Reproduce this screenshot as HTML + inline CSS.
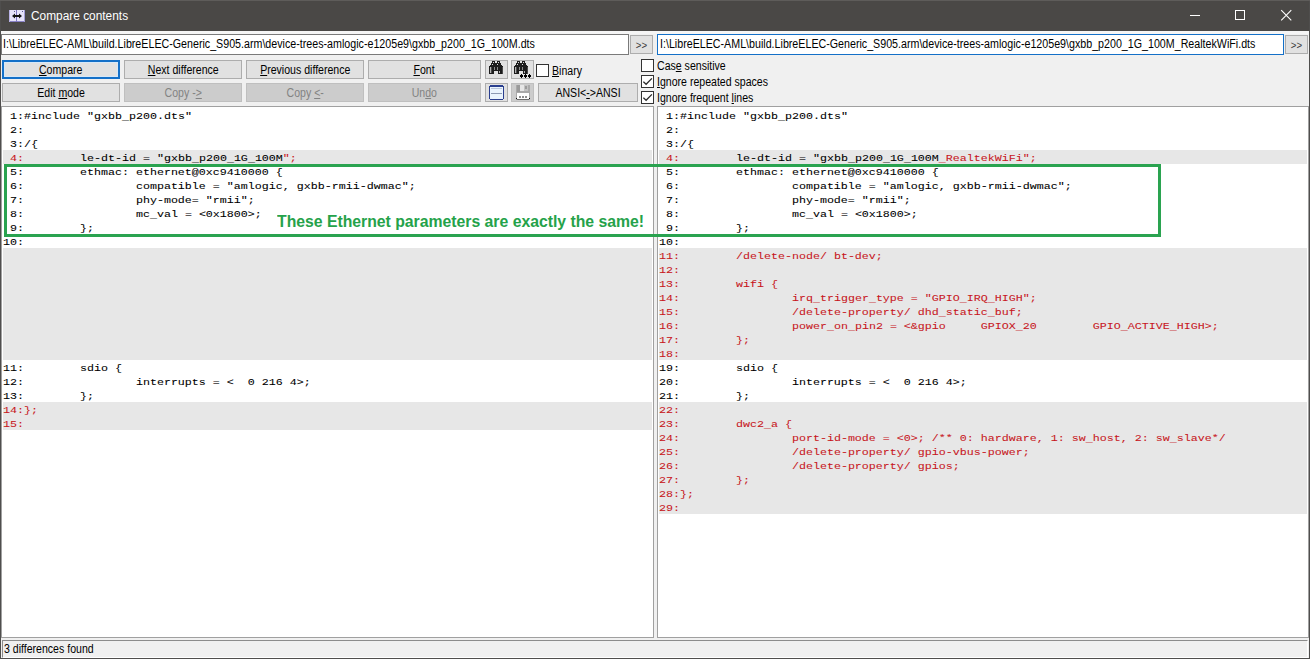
<!DOCTYPE html><html><head><meta charset="utf-8"><style>
*{margin:0;padding:0;box-sizing:border-box}
html,body{width:1310px;height:659px;overflow:hidden;background:#f0f0f0}
body{position:relative;font-family:"Liberation Sans",sans-serif;font-size:12px;color:#000}
.a{position:absolute}
.lbl{position:absolute;white-space:nowrap;transform-origin:0 0;transform:scaleX(0.88);line-height:14px}
.btn{position:absolute;background:#e1e1e1;border:1px solid #adadad}
.btn.dis{background:#cccccc;border-color:#bfbfbf}
.dis .t{color:#838383}
.btn .t{position:absolute;left:0;right:0;top:2px;text-align:center;white-space:nowrap;line-height:14px}
.btn .t span.s{display:inline-block;transform:scaleX(0.88)}
u{text-decoration:underline;text-underline-offset:1px}
.cb{position:absolute;width:13px;height:13px;border:1px solid #333;background:#fff}
.pane{position:absolute;top:106px;height:532px;background:#fff;border:1px solid #a0a0a0;overflow:hidden}
.code{position:absolute;left:1px;top:1px;right:1px;bottom:0;overflow:hidden}
.row{position:absolute;left:0;right:0;height:14px;font-family:"Liberation Mono",monospace;font-size:11.667px;-webkit-text-stroke:0.08px currentColor;line-height:14px;white-space:pre;color:#000}
.row.g{background:#e7e7e7}
.r{color:#c8181e}
.u{position:relative;top:2px}
.tx{display:block;transform-origin:0 0;transform:translateY(2px) scaleY(0.85)}
</style></head><body>
<div class="a" style="left:0;top:0;width:1310px;height:31px;background:#4a4846"></div>
<div class="a" style="left:1px;top:31px;width:1308px;height:3px;background:#f5f5f5"></div>
<svg class="a" style="left:9px;top:10px" width="16" height="12" viewBox="0 0 16 12" shape-rendering="crispEdges">
<rect x="0" y="0" width="16" height="12" fill="#e6e2fa"/>
<rect x="0" y="11" width="16" height="1" fill="#8a83c6"/>
<rect x="15" y="0" width="1" height="12" fill="#a29cd6"/>
<rect x="0" y="0" width="1" height="12" fill="#b9b3e6"/>
<rect x="7" y="0" width="1" height="12" fill="#7d76c0"/>
<rect x="5" y="1" width="1" height="1" fill="#5b5890"/><rect x="13" y="1" width="1" height="1" fill="#5b5890"/>
<path d="M3 6 L6 3.5 V5 H10 V3.5 L13 6 L10 8.5 V7 H6 V8.5 Z" fill="#111" shape-rendering="geometricPrecision"/>
</svg>
<div class="a" style="left:31px;top:9px;color:#fff;font-size:12px;line-height:14px;white-space:nowrap;transform-origin:0 0;transform:scaleX(0.99)">Compare contents</div>
<div class="a" style="left:1190px;top:15px;width:10px;height:1px;background:#fff"></div>
<div class="a" style="left:1235px;top:10px;width:10px;height:10px;border:1px solid #fff"></div>
<svg class="a" style="left:1280px;top:9px" width="13" height="13" viewBox="0 0 13 13"><path d="M1.2 1.2 L11.3 11.3 M11.3 1.2 L1.2 11.3" stroke="#fff" stroke-width="1.1"/></svg>
<div class="a" style="left:1px;top:34px;width:628px;height:21px;background:#fff;border:1px solid #7a7a7a"></div>
<div class="lbl" style="left:3px;top:37px;transform:scaleX(0.89);">I:\LibreELEC-AML\build.LibreELEC-Generic_S905.arm\device-trees-amlogic-e1205e9\gxbb_p200_1G_100M.dts</div>
<div class="btn" style="left:630px;top:35px;width:23px;height:19px"><div class="t" style="color:#3a3a3a;top:2px;font-size:11px"><span class="s">&gt;&gt;</span></div></div>
<div class="a" style="left:657px;top:34px;width:627px;height:21px;background:#fff;border:1px solid #1470c8"></div>
<div class="lbl" style="left:660px;top:37px;transform:scaleX(0.89);">I:\LibreELEC-AML\build.LibreELEC-Generic_S905.arm\device-trees-amlogic-e1205e9\gxbb_p200_1G_100M_RealtekWiFi.dts</div>
<div class="btn" style="left:1285px;top:35px;width:23px;height:19px"><div class="t" style="color:#3a3a3a;top:2px;font-size:11px"><span class="s">&gt;&gt;</span></div></div>
<div class="btn" style="left:2px;top:60px;width:118px;height:19px;border:2px solid #1470c8;box-shadow:inset 0 0 0 1px #d6e8f8"><div class="t" style="top:1px"><span class="s"><u>C</u>ompare</span></div></div>
<div class="btn" style="left:124px;top:60px;width:118px;height:19px;"><div class="t"><span class="s"><u>N</u>ext difference</span></div></div>
<div class="btn" style="left:246px;top:60px;width:118px;height:19px;"><div class="t"><span class="s"><u>P</u>revious difference</span></div></div>
<div class="btn" style="left:368px;top:60px;width:113px;height:19px;"><div class="t"><span class="s"><u>F</u>ont</span></div></div>
<div class="btn" style="left:485px;top:60px;width:23px;height:19px;"><div class="t"><span class="s"></span></div></div>
<div class="btn" style="left:511px;top:60px;width:23px;height:19px;"><div class="t"><span class="s"></span></div></div>
<svg class="a" style="left:487px;top:59px" width="18" height="17" viewBox="0 0 18 17" shape-rendering="crispEdges">
<g fill="#1c1c1c">
<rect x="5" y="2" width="3" height="2"/><rect x="10" y="2" width="3" height="2"/>
<rect x="4" y="4" width="10" height="2"/>
<rect x="3" y="6" width="12" height="1"/>
<rect x="2" y="7" width="5" height="8"/><rect x="11" y="7" width="5" height="8"/>
<rect x="7" y="6" width="4" height="6"/>
</g>
<g fill="#b4b4b4">
<rect x="3" y="8" width="1" height="6"/><rect x="12" y="12" width="1" height="2"/>
</g>
<g fill="#8a8a8a"><rect x="7" y="8" width="1" height="3"/><rect x="10" y="8" width="1" height="3"/></g>
<g fill="#dcdcdc"><rect x="6" y="3" width="1" height="1"/><rect x="11" y="3" width="1" height="1"/><rect x="5" y="5" width="1" height="1"/><rect x="10" y="5" width="1" height="1"/></g>
<g fill="#4a4a4a"><rect x="15" y="8" width="1" height="7"/><rect x="4" y="8" width="1" height="6"/></g>
</svg>
<svg class="a" style="left:512px;top:59px" width="18" height="17" viewBox="0 0 18 17" shape-rendering="crispEdges">
<g fill="#1c1c1c">
<rect x="5" y="2" width="3" height="2"/><rect x="10" y="2" width="3" height="2"/>
<rect x="4" y="4" width="10" height="2"/>
<rect x="3" y="6" width="12" height="1"/>
<rect x="2" y="7" width="5" height="8"/><rect x="11" y="7" width="5" height="8"/>
<rect x="7" y="6" width="4" height="6"/>
</g>
<g fill="#b4b4b4">
<rect x="3" y="8" width="1" height="6"/><rect x="12" y="12" width="1" height="2"/>
</g>
<g fill="#8a8a8a"><rect x="7" y="8" width="1" height="3"/><rect x="10" y="8" width="1" height="3"/></g>
<g fill="#dcdcdc"><rect x="6" y="3" width="1" height="1"/><rect x="11" y="3" width="1" height="1"/><rect x="5" y="5" width="1" height="1"/><rect x="10" y="5" width="1" height="1"/></g>
<g fill="#4a4a4a"><rect x="15" y="8" width="1" height="7"/><rect x="4" y="8" width="1" height="6"/></g>
</svg>
<svg class="a" style="left:519px;top:74px" width="14" height="5" viewBox="0 0 14 5" shape-rendering="crispEdges"><g fill="#000">
<rect x="1" y="1" width="3" height="2"/><rect x="2" y="0" width="1" height="4"/>
<rect x="5" y="1" width="3" height="2"/><rect x="6" y="0" width="1" height="4"/>
<rect x="9" y="1" width="3" height="2"/><rect x="10" y="0" width="1" height="4"/>
</g></svg>
<div class="btn" style="left:2px;top:83px;width:118px;height:19px;"><div class="t"><span class="s">Edit <u>m</u>ode</span></div></div>
<div class="btn dis" style="left:124px;top:83px;width:118px;height:19px;"><div class="t"><span class="s">Copy -<u>&gt;</u></span></div></div>
<div class="btn dis" style="left:246px;top:83px;width:118px;height:19px;"><div class="t"><span class="s">Copy <u>&lt;</u>-</span></div></div>
<div class="btn dis" style="left:368px;top:83px;width:113px;height:19px;"><div class="t"><span class="s">Un<u>d</u>o</span></div></div>
<div class="btn" style="left:485px;top:83px;width:23px;height:19px;"><div class="t"><span class="s"></span></div></div>
<div class="btn dis" style="left:511px;top:83px;width:23px;height:19px;"><div class="t"><span class="s"></span></div></div>
<svg class="a" style="left:489px;top:85px" width="15" height="15" viewBox="0 0 15 15" shape-rendering="crispEdges">
<path d="M1 0 H14 V1 H15 V14 H14 V15 H1 V14 H0 V1 H1 Z" fill="#2a3f8f"/>
<rect x="1" y="2" width="13" height="12" fill="#eaf4fd"/>
<rect x="2" y="3" width="11" height="1" fill="#b9c6dc"/>
<rect x="2" y="8" width="11" height="1" fill="#8d9ab3"/>
</svg>
<svg class="a" style="left:516px;top:85px" width="14" height="15" viewBox="0 0 14 15" shape-rendering="crispEdges">
<rect x="0" y="0" width="14" height="15" fill="#a9a9a9"/>
<rect x="1" y="0" width="3" height="7" fill="#9a9a9a"/>
<rect x="4" y="0" width="4" height="6" fill="#e6e6e6"/>
<rect x="8" y="0" width="4" height="6" fill="#c2c2c2"/>
<rect x="9" y="1" width="2" height="3" fill="#9b9b9b"/>
<rect x="1" y="8" width="12" height="6" fill="#ffffff"/>
<rect x="3" y="11" width="2" height="2" fill="#8f8f8f"/><rect x="6" y="11" width="2" height="2" fill="#8f8f8f"/><rect x="9" y="11" width="2" height="2" fill="#8f8f8f"/>
<rect x="0" y="13" width="1" height="1" fill="#111"/><rect x="13" y="13" width="1" height="1" fill="#111"/>
<rect x="1" y="14" width="12" height="1" fill="#6e6e6e"/>
</svg>
<div class="btn" style="left:538px;top:83px;width:100px;height:19px;"><div class="t"><span class="s">ANSI&lt;<u>-</u>&gt;ANSI</span></div></div>
<div class="cb" style="left:536px;top:64px"></div>
<div class="lbl" style="left:552px;top:64px;"><u>B</u>inary</div>
<div class="cb" style="left:641px;top:59px"></div>
<div class="lbl" style="left:657px;top:59px;">Cas<u>e</u> sensitive</div>
<div class="cb" style="left:641px;top:75px"><svg class="a" style="left:1px;top:2px" width="11" height="9" viewBox="0 0 11 9"><path d="M0.4 3.7 L3.1 6.3 L8.9 0.4" fill="none" stroke="#2a2a2a" stroke-width="1.25"/></svg></div>
<div class="lbl" style="left:657px;top:75px;"><u>I</u>gnore repeated spaces</div>
<div class="cb" style="left:641px;top:91px"><svg class="a" style="left:1px;top:2px" width="11" height="9" viewBox="0 0 11 9"><path d="M0.4 3.7 L3.1 6.3 L8.9 0.4" fill="none" stroke="#2a2a2a" stroke-width="1.25"/></svg></div>
<div class="lbl" style="left:657px;top:91px;">Ignore frequent <u>l</u>ines</div>
<div class="pane" style="left:1px;width:653px"><div class="code"><div class="row" style="top:0px"><span class="tx"> 1:#include &quot;gxbb<span class="u">_</span>p200.dts&quot;</span></div>
<div class="row" style="top:14px"><span class="tx"> 2:</span></div>
<div class="row" style="top:28px"><span class="tx"> 3:/{</span></div>
<div class="row g" style="top:42px"><span class="tx"><span class="r"> 4:</span>        le-dt-id = &quot;gxbb<span class="u">_</span>p200<span class="u">_</span>1G<span class="u">_</span>100M<span class="r">&quot;;</span></span></div>
<div class="row" style="top:56px"><span class="tx"> 5:        ethmac: ethernet@0xc9410000 {</span></div>
<div class="row" style="top:70px"><span class="tx"> 6:                compatible = &quot;amlogic, gxbb-rmii-dwmac&quot;;</span></div>
<div class="row" style="top:84px"><span class="tx"> 7:                phy-mode= &quot;rmii&quot;;</span></div>
<div class="row" style="top:98px"><span class="tx"> 8:                mc<span class="u">_</span>val = &lt;0x1800&gt;;</span></div>
<div class="row" style="top:112px"><span class="tx"> 9:        };</span></div>
<div class="row" style="top:126px"><span class="tx">10:</span></div>
<div class="row g" style="top:140px"></div>
<div class="row g" style="top:154px"></div>
<div class="row g" style="top:168px"></div>
<div class="row g" style="top:182px"></div>
<div class="row g" style="top:196px"></div>
<div class="row g" style="top:210px"></div>
<div class="row g" style="top:224px"></div>
<div class="row g" style="top:238px"></div>
<div class="row" style="top:252px"><span class="tx">11:        sdio {</span></div>
<div class="row" style="top:266px"><span class="tx">12:                interrupts = &lt;  0 216 4&gt;;</span></div>
<div class="row" style="top:280px"><span class="tx">13:        };</span></div>
<div class="row g" style="top:294px"><span class="tx"><span class="r">14:</span><span class="r">};</span></span></div>
<div class="row g" style="top:308px"><span class="tx"><span class="r">15:</span></span></div></div></div>
<div class="pane" style="left:657px;width:652px"><div class="code"><div class="row" style="top:0px"><span class="tx"> 1:#include &quot;gxbb<span class="u">_</span>p200.dts&quot;</span></div>
<div class="row" style="top:14px"><span class="tx"> 2:</span></div>
<div class="row" style="top:28px"><span class="tx"> 3:/{</span></div>
<div class="row g" style="top:42px"><span class="tx"><span class="r"> 4:</span>        le-dt-id = &quot;gxbb<span class="u">_</span>p200<span class="u">_</span>1G<span class="u">_</span>100M<span class="r"><span class="u">_</span>RealtekWiFi&quot;;</span></span></div>
<div class="row" style="top:56px"><span class="tx"> 5:        ethmac: ethernet@0xc9410000 {</span></div>
<div class="row" style="top:70px"><span class="tx"> 6:                compatible = &quot;amlogic, gxbb-rmii-dwmac&quot;;</span></div>
<div class="row" style="top:84px"><span class="tx"> 7:                phy-mode= &quot;rmii&quot;;</span></div>
<div class="row" style="top:98px"><span class="tx"> 8:                mc<span class="u">_</span>val = &lt;0x1800&gt;;</span></div>
<div class="row" style="top:112px"><span class="tx"> 9:        };</span></div>
<div class="row" style="top:126px"><span class="tx">10:</span></div>
<div class="row g" style="top:140px"><span class="tx"><span class="r">11:</span><span class="r">        /delete-node/ bt-dev;</span></span></div>
<div class="row g" style="top:154px"><span class="tx"><span class="r">12:</span></span></div>
<div class="row g" style="top:168px"><span class="tx"><span class="r">13:</span><span class="r">        wifi {</span></span></div>
<div class="row g" style="top:182px"><span class="tx"><span class="r">14:</span><span class="r">                irq<span class="u">_</span>trigger<span class="u">_</span>type = &quot;GPIO<span class="u">_</span>IRQ<span class="u">_</span>HIGH&quot;;</span></span></div>
<div class="row g" style="top:196px"><span class="tx"><span class="r">15:</span><span class="r">                /delete-property/ dhd<span class="u">_</span>static<span class="u">_</span>buf;</span></span></div>
<div class="row g" style="top:210px"><span class="tx"><span class="r">16:</span><span class="r">                power<span class="u">_</span>on<span class="u">_</span>pin2 = &lt;&amp;gpio     GPIOX<span class="u">_</span>20        GPIO<span class="u">_</span>ACTIVE<span class="u">_</span>HIGH&gt;;</span></span></div>
<div class="row g" style="top:224px"><span class="tx"><span class="r">17:</span><span class="r">        };</span></span></div>
<div class="row g" style="top:238px"><span class="tx"><span class="r">18:</span></span></div>
<div class="row" style="top:252px"><span class="tx">19:        sdio {</span></div>
<div class="row" style="top:266px"><span class="tx">20:                interrupts = &lt;  0 216 4&gt;;</span></div>
<div class="row" style="top:280px"><span class="tx">21:        };</span></div>
<div class="row g" style="top:294px"><span class="tx"><span class="r">22:</span></span></div>
<div class="row g" style="top:308px"><span class="tx"><span class="r">23:</span><span class="r">        dwc2<span class="u">_</span>a {</span></span></div>
<div class="row g" style="top:322px"><span class="tx"><span class="r">24:</span><span class="r">                port-id-mode = &lt;0&gt;; /** 0: hardware, 1: sw<span class="u">_</span>host, 2: sw<span class="u">_</span>slave*/</span></span></div>
<div class="row g" style="top:336px"><span class="tx"><span class="r">25:</span><span class="r">                /delete-property/ gpio-vbus-power;</span></span></div>
<div class="row g" style="top:350px"><span class="tx"><span class="r">26:</span><span class="r">                /delete-property/ gpios;</span></span></div>
<div class="row g" style="top:364px"><span class="tx"><span class="r">27:</span><span class="r">        };</span></span></div>
<div class="row g" style="top:378px"><span class="tx"><span class="r">28:</span><span class="r">};</span></span></div>
<div class="row g" style="top:392px"><span class="tx"><span class="r">29:</span></span></div></div></div>
<div class="a" style="left:4px;top:164px;width:1157px;height:73px;border:3px solid #2aa350"></div>
<div class="a" style="left:277px;top:213px;color:#25a24a;font-weight:bold;font-size:16px;line-height:18px;white-space:nowrap;transform-origin:0 0;transform:scaleX(0.985)">These Ethernet parameters are exactly the same!</div>
<div class="a" style="left:2px;top:640px;width:1306px;height:18px;border-top:1px solid #8c8c8c;border-left:1px solid #8c8c8c;border-right:1px solid #fff;border-bottom:1px solid #fff;background:#f0f0f0"></div>
<div class="lbl" style="left:4px;top:642px;">3 differences found</div>
<div class="a" style="left:0;top:0;width:1px;height:659px;background:#4f4e4d"></div>
<div class="a" style="left:1309px;top:0;width:1px;height:659px;background:#4f4e4d"></div>
<div class="a" style="left:0;top:658px;width:1310px;height:1px;background:#4f4e4d"></div>
<div class="a" style="left:0;top:0;width:1310px;height:1px;background:#5e5c5a"></div>
</body></html>
